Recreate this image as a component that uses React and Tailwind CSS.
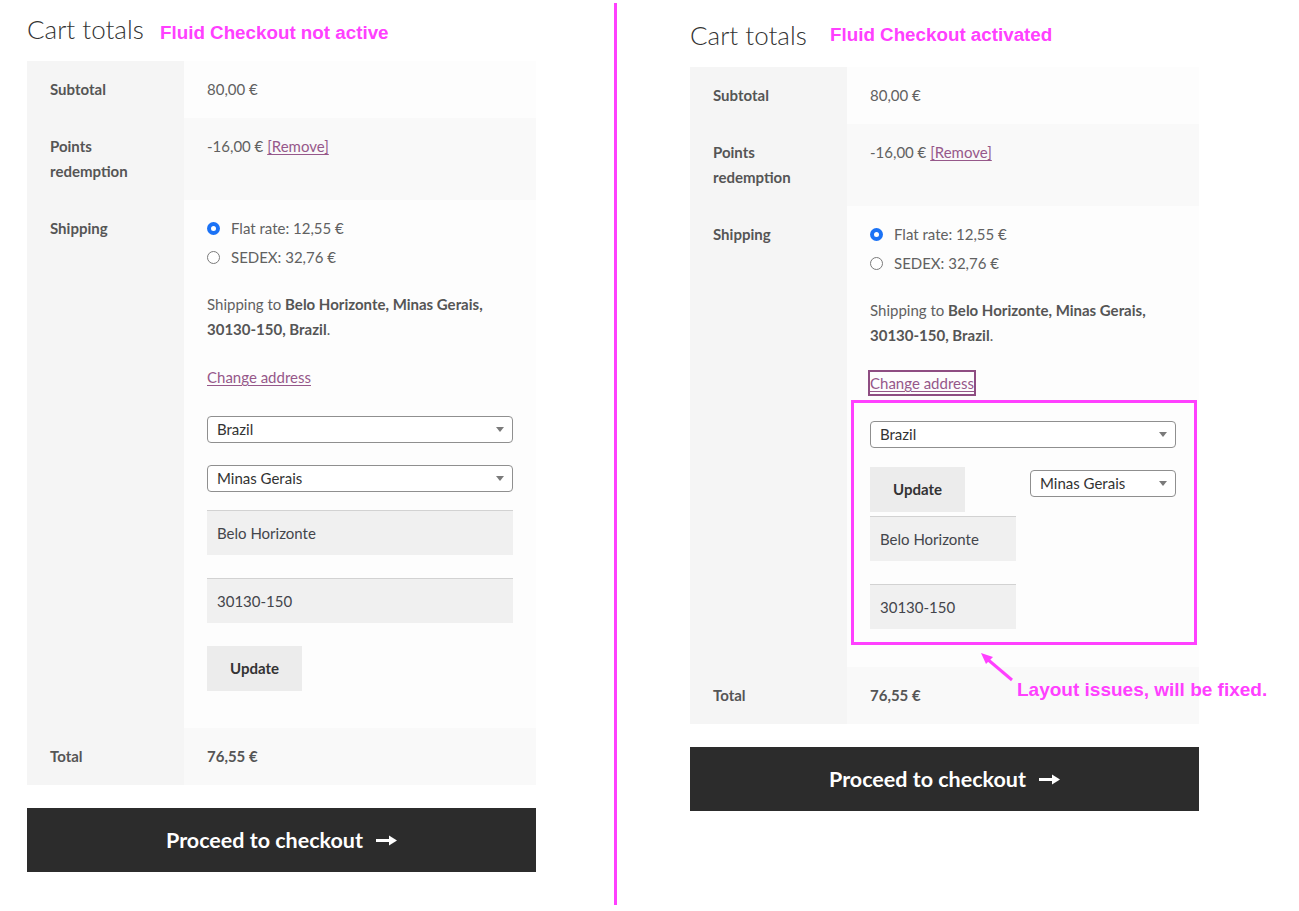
import React from "react";

const PINK = "#ff40ff";

// Small custom radio, blue filled when checked
const Radio = ({ checked }) => (
    <span
        className={
            "inline-flex items-center justify-center w-[13px] h-[13px] rounded-full shrink-0 " +
            (checked ? "bg-[#1b72f5]" : "bg-white border border-[#7a7a7a]")
        }
    >
        {checked && <span className="w-[5px] h-[5px] rounded-full bg-white" />}
    </span>
);

const Select = ({ value, className = "" }) => (
    <div className={"h-[27px] border border-[#8f8f8f] rounded-[4px] bg-white flex items-center justify-between pl-[9px] pr-[8px] text-[15px] text-[#333]" + " " + className}>
        <span>{value}</span>
        <svg width="8" height="5" viewBox="0 0 8 5">
            <path d="M0 0h8L4 5z" fill="#7a7a7a" />
        </svg>
    </div>
);

const Field = ({ value, className = "" }) => (
    <div className={"h-[45px] bg-[#f0f0f0] border-t border-[#d2d2d2] flex items-center px-[10px] text-[15px] text-[#43454b] " + className}>
        {value}
    </div>
);

const UpdateButton = ({ className = "" }) => (
    <button className={"h-[45px] w-[95px] bg-[#ececec] font-bold text-[15px] text-[#333] " + className}>Update</button>
);

const Row = ({ label, even, children, cellClass = "py-4" }) => (
    <div className="flex leading-[25px] text-[15px]">
        <div className="w-[157px] shrink-0 bg-[#f5f5f5] px-[23px] py-4 font-bold text-[#555]">{label}</div>
        <div className={"flex-1 px-[23px] text-[#616161] " + cellClass + " " + (even ? "bg-[#f9f9f9]" : "bg-[#fdfdfd]")}>
            {children}
        </div>
    </div>
);

const ArrowGlyph = () => (
    <svg width="21" height="11" viewBox="0 0 21 11" className="ml-[13px]">
        <rect x="0" y="4" width="15" height="3" fill="white" />
        <path d="M13 0.5L21 5.5L13 10.5z" fill="white" />
    </svg>
);

const ShippingOptions = () => (
    <>
        <ul className="flex flex-col gap-[4px]">
            <li className="flex items-center gap-[11px]"><Radio checked /> Flat rate: 12,55 €</li>
            <li className="flex items-center gap-[11px]"><Radio /> SEDEX: 32,76 €</li>
        </ul>
        <p className="mt-[22px]">
            Shipping to <strong className="text-[#555]">Belo Horizonte, Minas Gerais, 30130-150, Brazil</strong>.
        </p>
    </>
);

const CartTotals = ({ active }) => (
    <div className="w-[509px]">
        <div className={"flex items-start " + (active ? "pt-[18px]" : "pt-[12px]")}>
            <h2 className={"font-light text-[26px] leading-[34px] text-[#333] " + (active ? "w-[140px]" : "w-[133px]")}>Cart totals</h2>
            <span
                className={"font-['Liberation_Sans',Arial,sans-serif] font-bold text-[18.8px] leading-[20px] " + (active ? "mt-[7px]" : "mt-[11px]")}
                style={{ color: PINK }}
            >
                {active ? "Fluid Checkout activated" : "Fluid Checkout not active"}
            </span>
        </div>

        <div className="mt-[15px]">
            <Row label="Subtotal">80,00 €</Row>
            <Row label="Points redemption" even>
                -16,00 € <a className="text-[#96588a] underline underline-offset-2">[Remove]</a>
            </Row>
            {active ? (
                <Row label="Shipping" cellClass="pt-4 pb-[22px]">
                    <ShippingOptions />
                    <div className="mt-[23px]">
                        <a className="inline-block leading-[22px] text-[#96588a] underline underline-offset-2 outline-2 outline-[#8e4d82]">Change address</a>
                    </div>
                    {/* the form wrapping breaks once the plugin is on */}
                    <div className="mt-[4px] -ml-[19px] -mr-[21px] border-[3px] border-[#ff40ff] pl-[16px] pr-[18px] pt-[18px] pb-[13px]">
                        <Select value="Brazil" />
                        <div className="flex justify-between items-start mt-[19px]">
                            <UpdateButton />
                            <Select value="Minas Gerais" className="w-[146px] mt-[3px]" />
                        </div>
                        <Field value="Belo Horizonte" className="w-[146px] mt-[4px]" />
                        <Field value="30130-150" className="w-[146px] mt-[23px]" />
                    </div>
                </Row>
            ) : (
                <Row label="Shipping" cellClass="pt-4 pb-[37px]">
                    <ShippingOptions />
                    <div className="mt-[23px]">
                        <a className="text-[#96588a] underline underline-offset-2">Change address</a>
                    </div>
                    <Select value="Brazil" className="mt-[26px]" />
                    <Select value="Minas Gerais" className="mt-[22px]" />
                    <Field value="Belo Horizonte" className="mt-[18px]" />
                    <Field value="30130-150" className="mt-[23px]" />
                    <UpdateButton className="mt-[23px]" />
                </Row>
            )}
            <Row label="Total" even>
                <strong className="text-[#555]">76,55 €</strong>
            </Row>
        </div>

        <button className="w-full h-[64px] mt-[23px] bg-[#2c2c2c] text-white font-bold text-[21.5px] flex items-center justify-center">
            Proceed to checkout
            <ArrowGlyph />
        </button>
    </div>
);

export default function App() {
    return (
        <div className="relative h-[911px] w-[1299px] bg-white overflow-hidden font-['Lato',sans-serif]">
            <div className="flex items-start pl-[27px]">
                <CartTotals />
                <div className="ml-[78px] mt-[3px] w-[3px] h-[902px]" style={{ backgroundColor: PINK }} />
                <div className="relative ml-[73px]">
                    <CartTotals active />
                    {/* note pointing at the broken form */}
                    <svg className="absolute left-[288px] top-[650px]" width="38" height="34" viewBox="0 0 38 34">
                        <line x1="34" y1="30" x2="8" y2="8" stroke={PINK} strokeWidth="3" />
                        <path d="M3 3L15 7L8 14z" fill={PINK} />
                    </svg>
                    <span className="absolute left-[327px] top-[680px] whitespace-nowrap font-['Liberation_Sans',Arial,sans-serif] font-bold text-[19px] leading-[20px]" style={{ color: PINK }}>
                        Layout issues, will be fixed.
                    </span>
                </div>
            </div>
        </div>
    );
}
